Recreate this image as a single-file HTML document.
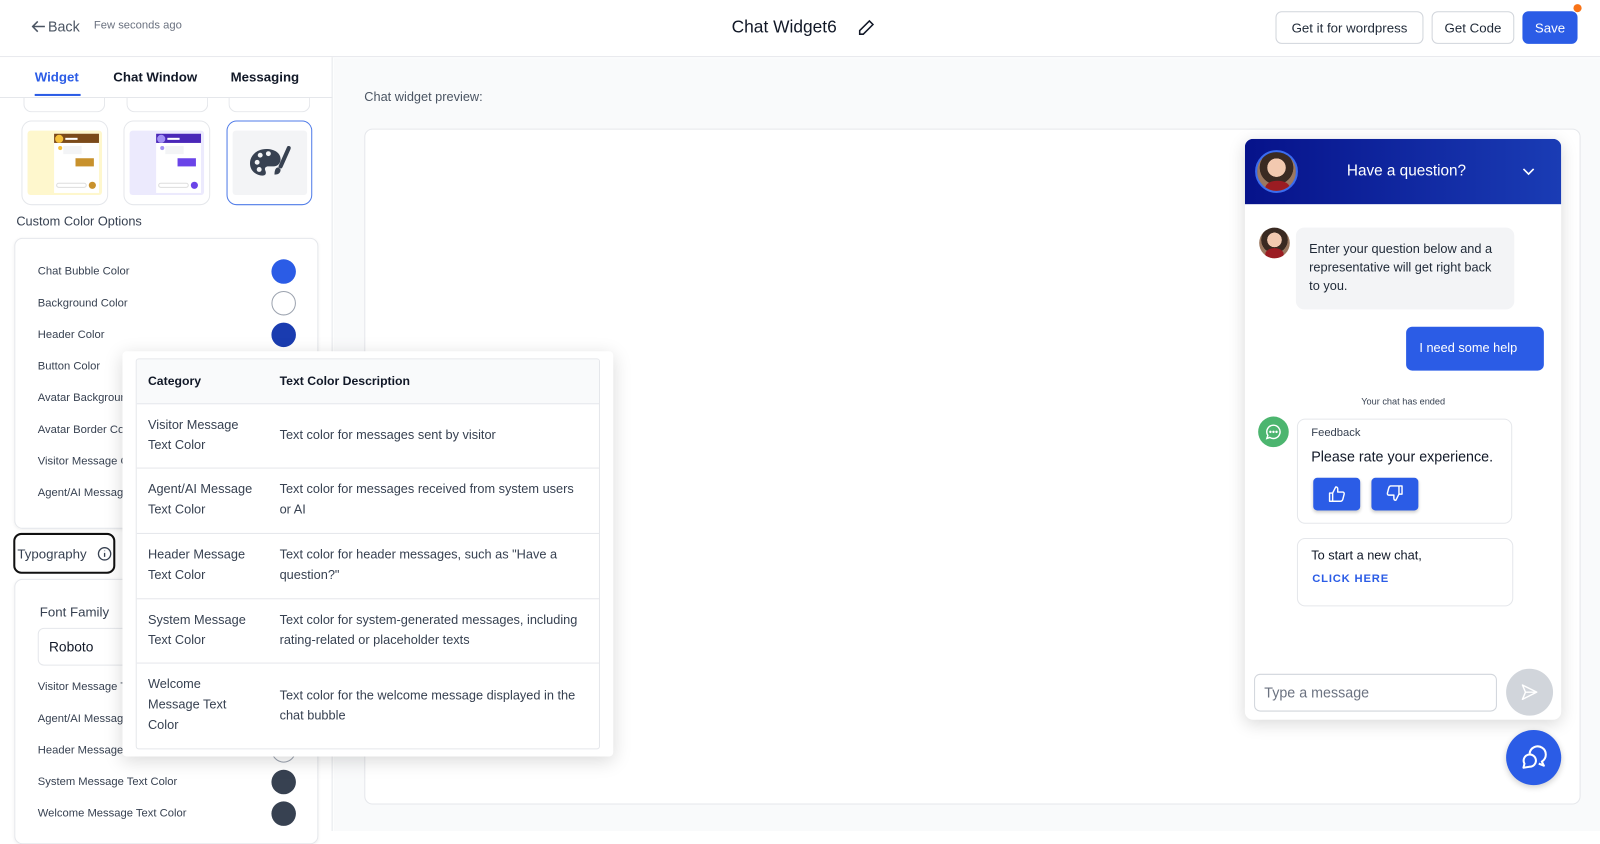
<!DOCTYPE html>
<html><head><meta charset="utf-8"><style>
*{box-sizing:border-box;margin:0;padding:0}
html,body{width:1600px;height:831px;overflow:hidden;background:#fff;font-family:"Liberation Sans",sans-serif;color:#1f2937}
#w{position:absolute;left:0;top:0;width:1568px;height:814px;transform:scale(1.0204,1.0209);transform-origin:0 0}
.a{position:absolute}
.t{position:absolute;white-space:nowrap}
.btn{position:absolute;border:1px solid #d1d5db;border-radius:6px;background:#fff;font-size:13px;color:#1f2937;display:flex;align-items:center;justify-content:center}
.row{position:absolute;left:37px;font-size:11px;color:#374151}
.dot{position:absolute;left:266px;width:24px;height:24px;border-radius:50%}
.tr{position:absolute;left:0;width:454px;border-top:1px solid #e5e7eb;font-size:12.5px;color:#374151;line-height:20px}
.tr .c1{position:absolute;left:11px;width:104px}
.tr .c2{position:absolute;left:140px;width:300px}
</style></head><body><div id="w">
<div class="a" style="left:0;top:0;width:1568px;height:56px;border-bottom:1px solid #e5e7eb;background:#fff"></div>
<svg class="a" style="left:31px;top:19px" width="14" height="14" viewBox="0 0 14 14" fill="none" stroke="#4b5563" stroke-width="1.5"><path d="M13 7H1M6 2L1 7l5 5"/></svg>
<div class="t" style="left:47px;top:18px;font-size:14px;color:#4b5563">Back</div>
<div class="t" style="left:92px;top:19px;font-size:11px;color:#6b7280">Few seconds ago</div>
<div class="t" style="left:717px;top:17px;font-size:17px;color:#111827">Chat Widget6</div>
<svg class="a" style="left:840px;top:18px" width="18" height="18" viewBox="0 0 18 18" fill="none" stroke="#111827" stroke-width="1.5"><path d="M12 2.5l3.5 3.5L6 15.5H2.5V12z"/></svg>
<div class="btn" style="left:1250px;top:11px;width:145px;height:32px">Get it for wordpress</div>
<div class="btn" style="left:1403px;top:11px;width:81px;height:32px">Get Code</div>
<div class="btn" style="left:1492px;top:11px;width:54px;height:32px;background:#2b5ce6;border-color:#2b5ce6;color:#fff">Save</div>
<div class="a" style="left:1542px;top:4px;width:8px;height:8px;border-radius:50%;background:#f97316"></div>
<div class="a" style="left:0;top:56px;width:326px;height:758px;border-right:1px solid #e5e7eb;background:#fff"></div>
<div class="t" style="left:34px;top:68px;font-size:13px;color:#2b5ce6;font-weight:bold">Widget</div>
<div class="a" style="left:34px;top:92px;width:45px;height:2px;background:#2b5ce6"></div>
<div class="t" style="left:111px;top:68px;font-size:13px;color:#111827;font-weight:bold">Chat Window</div>
<div class="t" style="left:226px;top:68px;font-size:13px;color:#111827;font-weight:bold">Messaging</div>
<div class="a" style="left:0;top:95px;width:326px;height:1px;background:#e5e7eb"></div>
<div class="a" style="left:23px;top:96px;width:80px;height:14px;border:1px solid #e5e7eb;border-top:none;border-radius:0 0 8px 8px"></div>
<div class="a" style="left:124px;top:96px;width:80px;height:14px;border:1px solid #e5e7eb;border-top:none;border-radius:0 0 8px 8px"></div>
<div class="a" style="left:224px;top:96px;width:80px;height:14px;border:1px solid #e5e7eb;border-top:none;border-radius:0 0 8px 8px"></div>
<div class="a" style="left:21px;top:118px;width:85px;height:83px;border:1px solid #e5e7eb;border-radius:10px">
 <div class="a" style="left:5px;top:9px;width:73px;height:63px;background:#fef7cd;border-radius:3px"></div>
 <div class="a" style="left:31px;top:12px;width:44px;height:58px;background:#fff"></div>
 <div class="a" style="left:31px;top:12px;width:44px;height:9px;background:#7b4a1a"></div>
 <div class="a" style="left:32px;top:13px;width:8px;height:8px;border-radius:50%;background:#f5c03b"></div>
 <div class="a" style="left:42px;top:16px;width:12px;height:1.5px;background:#fff"></div>
 <div class="a" style="left:35px;top:24px;width:4px;height:4px;border-radius:50%;background:#f5c03b"></div>
 <div class="a" style="left:40px;top:24px;width:18px;height:8px;background:#f3f4f6"></div>
 <div class="a" style="left:52px;top:36px;width:18px;height:8px;background:#c8912c"></div>
 <div class="a" style="left:33px;top:60px;width:30px;height:5px;border:1px solid #ddd;border-radius:3px"></div>
 <div class="a" style="left:65px;top:59px;width:7px;height:7px;border-radius:50%;background:#c8912c"></div>
</div>
<div class="a" style="left:121px;top:118px;width:85px;height:83px;border:1px solid #e5e7eb;border-radius:10px">
 <div class="a" style="left:5px;top:9px;width:73px;height:63px;background:#eceafd;border-radius:3px"></div>
 <div class="a" style="left:31px;top:12px;width:44px;height:58px;background:#fff"></div>
 <div class="a" style="left:31px;top:12px;width:44px;height:9px;background:#4a27b8"></div>
 <div class="a" style="left:32px;top:13px;width:8px;height:8px;border-radius:50%;background:#a391f5"></div>
 <div class="a" style="left:42px;top:16px;width:12px;height:1.5px;background:#fff"></div>
 <div class="a" style="left:35px;top:24px;width:4px;height:4px;border-radius:50%;background:#a391f5"></div>
 <div class="a" style="left:40px;top:24px;width:18px;height:8px;background:#f3f4f6"></div>
 <div class="a" style="left:52px;top:36px;width:18px;height:8px;background:#6a44e8"></div>
 <div class="a" style="left:33px;top:60px;width:30px;height:5px;border:1px solid #ddd;border-radius:3px"></div>
 <div class="a" style="left:65px;top:59px;width:7px;height:7px;border-radius:50%;background:#6a44e8"></div>
</div>
<div class="a" style="left:222px;top:118px;width:84px;height:83px;border:1px solid #4f7be8;border-radius:10px">
 <div class="a" style="left:5px;top:9px;width:73px;height:63px;background:#f3f4f6;border-radius:3px"></div>
 <svg class="a" style="left:20px;top:24px" width="42" height="32" viewBox="0 0 42 32"><path d="M18 3C8 3 2 10 2 17c0 8 7 12 12 12 4 0 4-3 3-5s0-4 3-4h5c4 0 7-3 7-7C32 7 26 3 18 3z" fill="#374151"/><circle cx="9" cy="16" r="2.4" fill="#f3f4f6"/><circle cx="12" cy="9" r="2.4" fill="#f3f4f6"/><circle cx="20" cy="7.5" r="2.4" fill="#f3f4f6"/><circle cx="11" cy="23" r="2.4" fill="#f3f4f6"/><path d="M40 2L32 20" stroke="#374151" stroke-width="4" stroke-linecap="round"/><path d="M30 21c-3 0-4 3-4 7 3 0 6-1 6-5z" fill="#374151"/></svg>
</div>
<div class="t" style="left:16px;top:210px;font-size:12.5px;color:#374151">Custom Color Options</div>
<div class="a" style="left:14px;top:233px;width:298px;height:285px;border:1px solid #e5e7eb;border-radius:8px;box-shadow:0 1px 3px rgba(0,0,0,.06)"></div>
<div class="row" style="top:260px">Chat Bubble Color</div><div class="dot" style="top:254px;background:#2b5ce6"></div>
<div class="row" style="top:291px">Background Color</div><div class="dot" style="top:285px;border:1px solid #9ca3af;background:#fff"></div>
<div class="row" style="top:322px">Header Color</div><div class="dot" style="top:316px;background:#1a3cb0"></div>
<div class="row" style="top:353px">Button Color</div>
<div class="row" style="top:384px">Avatar Background Color</div>
<div class="row" style="top:415px">Avatar Border Color</div>
<div class="row" style="top:446px">Visitor Message Color</div>
<div class="row" style="top:477px">Agent/AI Message Color</div>
<div class="a" style="left:13px;top:522px;width:100px;height:40px;border:2px solid #111;border-radius:8px"></div>
<div class="t" style="left:17px;top:535px;font-size:13px;color:#374151">Typography</div>
<svg class="a" style="left:95px;top:535px" width="15" height="15" viewBox="0 0 15 15" fill="none" stroke="#374151" stroke-width="1.3"><circle cx="7.5" cy="7.5" r="6"/><path d="M7.5 6.5v4M7.5 4.3v.5"/></svg>
<div class="a" style="left:14px;top:567px;width:298px;height:260px;border:1px solid #e5e7eb;border-radius:8px;box-shadow:0 1px 3px rgba(0,0,0,.06)"></div>
<div class="t" style="left:39px;top:592px;font-size:13px;color:#374151">Font Family</div>
<div class="a" style="left:37px;top:615px;width:250px;height:37px;border:1px solid #e5e7eb;border-radius:6px"></div>
<div class="t" style="left:48px;top:626px;font-size:13.5px;color:#111827">Roboto</div>
<div class="row" style="top:667px">Visitor Message Text Color</div>
<div class="row" style="top:698px">Agent/AI Message Text Color</div>
<div class="row" style="top:729px">Header Message Text Color</div><div class="dot" style="top:723px;border:1px solid #9ca3af;background:#fff"></div>
<div class="row" style="top:760px">System Message Text Color</div><div class="dot" style="top:754px;background:#374151"></div>
<div class="row" style="top:791px">Welcome Message Text Color</div><div class="dot" style="top:785px;background:#374151"></div>
<div class="a" style="left:327px;top:57px;width:1241px;height:757px;background:#f9fafb"></div>
<div class="t" style="left:357px;top:88px;font-size:12.5px;color:#4b5563">Chat widget preview:</div>
<div class="a" style="left:357px;top:126px;width:1192px;height:662px;background:#fff;border:1px solid #e5e7eb;border-radius:8px"></div>
<div class="a" style="left:1220px;top:136px;width:310px;height:569px;background:#fff;border-radius:8px;box-shadow:0 4px 16px rgba(0,0,0,.15);overflow:hidden">
 <div class="a" style="left:0;top:0;width:310px;height:64px;background:linear-gradient(90deg,#06128a,#1a3cb5)"></div>
 <div class="a" style="left:10px;top:11px;width:42px;height:42px;border-radius:50%;border:2px solid #3b6cf0;background:radial-gradient(circle at 50% 40%,#f2c9b0 0 30%,#3a2a22 31% 55%,#9b7860 56%);overflow:hidden"><div class="a" style="left:8px;top:28px;width:24px;height:14px;border-radius:50% 50% 0 0;background:#9b1c22"></div></div>
 <div class="t" style="left:100px;top:23px;font-size:15px;color:#fff">Have a question?</div>
 <svg class="a" style="left:272px;top:27px" width="12" height="10" viewBox="0 0 12 10" fill="none" stroke="#fff" stroke-width="1.6"><path d="M1 2.5l5 5 5-5"/></svg>
 <div class="a" style="left:14px;top:87px;width:30px;height:30px;border-radius:50%;background:radial-gradient(circle at 50% 40%,#f2c9b0 0 30%,#3a2a22 31% 55%,#9b7860 56%);overflow:hidden"><div class="a" style="left:6px;top:20px;width:18px;height:12px;border-radius:50% 50% 0 0;background:#9b1c22"></div></div>
 <div class="a" style="left:50px;top:87px;width:214px;height:80px;background:#f3f4f6;border-radius:8px;padding:12px 13px;font-size:12.5px;line-height:18px;color:#1f2937">Enter your question below and a representative will get right back to you.</div>
 <div class="a" style="left:158px;top:184px;width:135px;height:43px;background:#2b5ce6;border-radius:6px;color:#fff;font-size:12.5px;line-height:43px;padding-left:13px">I need some help</div>
 <div class="t" style="left:114px;top:252px;font-size:9px;color:#374151">Your chat has ended</div>
 <div class="a" style="left:13px;top:272px;width:30px;height:30px;border-radius:50%;background:#4cb56f"></div>
 <svg class="a" style="left:19px;top:278px" width="18" height="18" viewBox="0 0 18 18" fill="none" stroke="#fff" stroke-width="1.4"><path d="M9 2.5a6.5 6.5 0 1 1-3.5 12L2.5 15.5l1-3A6.5 6.5 0 0 1 9 2.5z"/><circle cx="6" cy="9" r=".5" fill="#fff"/><circle cx="9" cy="9" r=".5" fill="#fff"/><circle cx="12" cy="9" r=".5" fill="#fff"/></svg>
 <div class="a" style="left:51px;top:274px;width:211px;height:103px;border:1px solid #e5e7eb;border-radius:8px"></div>
 <div class="t" style="left:65px;top:282px;font-size:11px;color:#374151">Feedback</div>
 <div class="t" style="left:65px;top:303px;font-size:14px;color:#111827">Please rate your experience.</div>
 <div class="a" style="left:67px;top:332px;width:46px;height:32px;background:#2b5ce6;border-radius:4px;box-shadow:0 2px 3px rgba(0,0,0,.2)"></div>
 <svg class="a" style="left:81px;top:339px" width="18" height="18" viewBox="0 0 18 18" fill="none" stroke="#fff" stroke-width="1.4" stroke-linejoin="round"><path d="M2 8h3v8H2zM5 8l3-6c1.5 0 2 1 2 2v3h5c1 0 1.5 1 1.3 2l-1.3 5c-.3 1-1 2-2 2H5"/></svg>
 <div class="a" style="left:124px;top:332px;width:46px;height:32px;background:#2b5ce6;border-radius:4px;box-shadow:0 2px 3px rgba(0,0,0,.2)"></div>
 <svg class="a" style="left:138px;top:338px" width="18" height="18" viewBox="0 0 18 18" fill="none" stroke="#fff" stroke-width="1.4" stroke-linejoin="round"><path d="M16 10h-3V2h3zM13 10l-3 6c-1.5 0-2-1-2-2v-3H3c-1 0-1.5-1-1.3-2L3 4c.3-1 1-2 2-2h8"/></svg>
 <div class="a" style="left:51px;top:391px;width:212px;height:67px;border:1px solid #e5e7eb;border-radius:8px"></div>
 <div class="t" style="left:65px;top:401px;font-size:12.5px;color:#111827">To start a new chat,</div>
 <div class="t" style="left:66px;top:425px;font-size:11px;color:#2b5ce6;letter-spacing:.8px;font-weight:bold">CLICK HERE</div>
 <div class="a" style="left:9px;top:524px;width:238px;height:37px;border:1px solid #d1d5db;border-radius:6px"></div>
 <div class="t" style="left:19px;top:534px;font-size:14px;color:#6b7280">Type a message</div>
 <div class="a" style="left:256px;top:519px;width:46px;height:46px;border-radius:50%;background:#d1d5db"></div>
 <svg class="a" style="left:270px;top:533px" width="18" height="18" viewBox="0 0 18 18" fill="none" stroke="#fff" stroke-width="1.4" stroke-linejoin="round"><path d="M2 2l14 7-14 7 3-7zM5 9h11"/></svg>
</div>
<div class="a" style="left:1476px;top:715px;width:54px;height:54px;border-radius:50%;background:#2b5ce6;box-shadow:0 2px 6px rgba(0,0,0,.2)"></div>
<svg class="a" style="left:1490px;top:729px" width="26" height="26" viewBox="0 0 26 26" fill="none" stroke="#fff" stroke-width="2" stroke-linejoin="round"><path d="M9 9a8 8 0 1 1 12 8l2 4-5-2"/><path d="M3 23l1-4a6 6 0 1 1 5 3z"/></svg>
<div class="a" style="left:120px;top:344px;width:481px;height:397px;background:#fff;border-radius:4px;box-shadow:0 4px 18px rgba(0,0,0,.15)">
 <div class="a" style="left:13px;top:7px;width:455px;height:383px;border:1px solid #e5e7eb;border-radius:3px;overflow:hidden">
  <div class="a" style="left:0;top:0;width:454px;height:43px;background:#f9fafb"></div>
  <div class="t" style="left:11px;top:14px;font-size:12px;font-weight:bold;color:#111827">Category</div>
  <div class="t" style="left:140px;top:14px;font-size:12px;font-weight:bold;color:#111827">Text Color Description</div>
  <div class="tr" style="top:43px;height:64px"><div class="c1" style="top:10px">Visitor Message Text Color</div><div class="c2" style="top:20px">Text color for messages sent by visitor</div></div>
  <div class="tr" style="top:106px;height:64px"><div class="c1" style="top:10px">Agent/AI Message Text Color</div><div class="c2" style="top:10px">Text color for messages received from system users or AI</div></div>
  <div class="tr" style="top:170px;height:64px"><div class="c1" style="top:10px">Header Message Text Color</div><div class="c2" style="top:10px">Text color for header messages, such as "Have a question?"</div></div>
  <div class="tr" style="top:234px;height:64px"><div class="c1" style="top:10px">System Message Text Color</div><div class="c2" style="top:10px">Text color for system-generated messages, including rating-related or placeholder texts</div></div>
  <div class="tr" style="top:297px;height:86px"><div class="c1" style="top:10px;width:95px">Welcome Message Text Color</div><div class="c2" style="top:21px">Text color for the welcome message displayed in the chat bubble</div></div>
 </div>
</div>
</div></body></html>
